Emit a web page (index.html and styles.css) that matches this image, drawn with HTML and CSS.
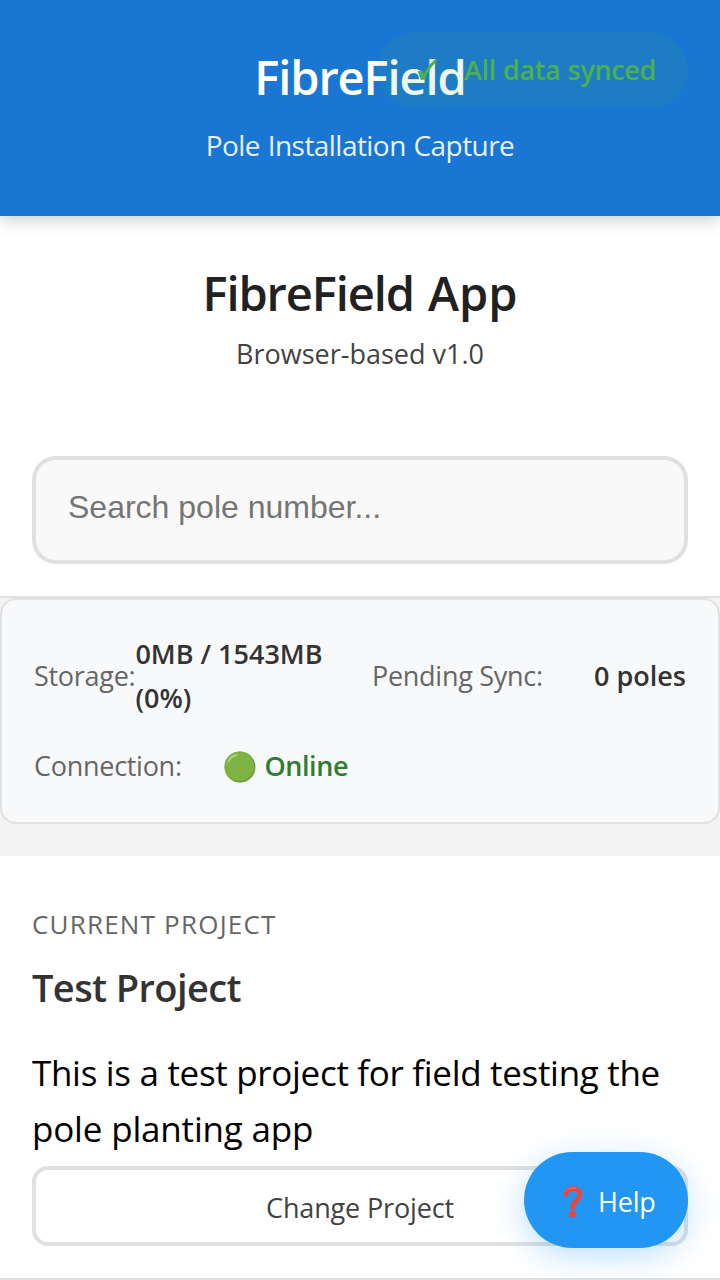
FILE: index.html
```html
<!DOCTYPE html>
<html lang="en">
<head>
<meta charset="utf-8">
<title>FibreField</title>
<link rel="stylesheet" href="styles.css">
</head>
<body>
<header class="header">
  <h1 class="brand">FibreField</h1>
  <p class="tagline">Pole Installation Capture</p>
</header>
<div class="sync-badge">
  <svg class="check" viewBox="0 0 22 22" width="22" height="22"><path d="M.8 12.600 4.900 11.300 6.600 15.200C9 10.500 13 4.500 17.300 1L21 1C15.700 6 10.700 13 7.600 20.400L3.800 20.900Z" fill="#4caf50"/></svg>
  <span class="sync-text">All data synced</span>
</div>
<main>
  <section class="intro">
    <h2 class="app-title">FibreField <span class="app-word">App</span></h2>
    <p class="version">Browser-based v1.0</p>
    <input class="search" type="text" placeholder="Search pole number...">
  </section>
  <section class="status">
    <div class="status-item"><span class="label">Storage:</span><span class="value storage-value">0MB / 1543MB (0%)</span></div>
    <div class="status-item"><span class="label">Pending Sync:</span><span class="value">0 poles</span></div>
    <div class="status-item"><span class="label">Connection:</span><span class="value online">
      <svg class="dot" viewBox="0 0 32 32" width="32" height="32"><circle cx="16" cy="16" r="15.500" fill="#689f38"/><circle cx="15.300" cy="15.400" r="14.700" fill="#7cb342"/><path d="M4 11C5 6 9 3 13 3.200 15 3.500 13.500 5 11.500 5.500 8.500 6.500 7 8 5.500 10.500 4.800 11.700 4 12 4 11Z" fill="#aed581"/></svg><span class="online-text">Online</span></span></div>
  </section>
  <section class="project">
    <div class="eyebrow">CURRENT PROJECT</div>
    <h3 class="project-name">Test Project</h3>
    <p class="description"><span class="line-one">This is a test project for field testing the</span> <span class="line-two">pole planting app</span></p>
    <button class="change"><span>Change Project</span></button>
  </section>
</main>
<button class="help">
  <svg class="question" viewBox="0 0 20 32" width="20" height="32"><path d="M2.800 8.600C3.600 4.200 6 2.700 10 2.700 14.500 2.700 17 5 17 8.400 17 14 9.800 14.500 9.600 21.800" fill="none" stroke="#f44336" stroke-width="4.600" stroke-linecap="round"/><path d="M4 5C6 2 10 1.300 13 2.300" fill="none" stroke="#ff7569" stroke-width="1" stroke-linecap="round"/><circle cx="9.600" cy="28.300" r="3.300" fill="#f44336"/></svg>
  <span class="help-text">Help</span>
</button>
</body>
</html>
```

FILE: styles.css
```css
* { box-sizing: border-box; }
body {
  margin: 0;
  height: 1280px;
  overflow: hidden;
  background: #f4f4f4;
  color: #000;
  font-family: "Open Sans", "Noto Sans", sans-serif;
}
h1, h2, h3, p { margin: 0; }
.header {
  position: relative;
  height: 216px;
  padding-top: 43px;
  background: #1976d2;
  color: #fff;
  text-align: center;
  box-shadow: 0 4px 16px rgba(0, 0, 0, .2);
  z-index: 1;
}
.brand { font-size: 47px; line-height: 68px; font-weight: 600; letter-spacing: -1.1px; }
.tagline { margin-top: 12px; font-size: 28px; line-height: 44px; opacity: .9; letter-spacing: -.55px; word-spacing: 1px; }
.sync-badge {
  position: absolute;
  top: 32px;
  right: 32px;
  z-index: 2;
  display: flex;
  align-items: center;
  width: 311px;
  height: 76px;
  padding-left: 40px;
  border-radius: 38px;
  background: rgba(76, 175, 80, .1);
  color: #4caf50;
}
.check { flex: none; margin-right: 25px; }
.sync-text { padding-bottom: 2px; font-size: 27px; font-weight: 600; letter-spacing: -.35px; word-spacing: .5px; white-space: nowrap; }
.intro {
  height: 382px;
  padding: 43px 32px 32px;
  border-bottom: 2px solid #e0e0e0;
  background: #fff;
  text-align: center;
}
.app-title { font-size: 47px; line-height: 68px; font-weight: 600; color: #212121; letter-spacing: -1.1px; word-spacing: 3px; }
.app-word { letter-spacing: 0; }
.version { margin-top: 5px; font-size: 27px; line-height: 44px; color: #424242; }
.search {
  display: block;
  width: 100%;
  height: 108px;
  margin-top: 80px;
  padding: 0 32px 6px;
  border: 4px solid #e0e0e0;
  border-radius: 24px;
  background: #f9f9f9;
  font: 32px "Liberation Sans", Arial, sans-serif;
}
.search::placeholder { color: #757575; }
.status {
  display: grid;
  grid-template-columns: 314px 314px;
  grid-template-rows: 88px 44px;
  gap: 24px;
  height: 226px;
  padding: 32px;
  border: 2px solid #e0e0e0;
  border-radius: 16px;
  background: #f8f9fb;
}
.status-item { display: flex; align-items: center; justify-content: space-between; font-size: 27px; line-height: 44px; }
.label { color: #666; white-space: nowrap; letter-spacing: -.28px; }
.value { color: #333; font-weight: 600; white-space: nowrap; }
.storage-value { width: 215px; white-space: normal; }
.online { display: flex; align-items: center; gap: 9px; color: #2e7d32; }
.online-text { letter-spacing: -.45px; }
.dot { position: relative; top: 1px; }
.project {
  height: 424px;
  margin-top: 32px;
  padding: 47px 32px 0;
  border-bottom: 2px solid #e0e0e0;
  background: #fff;
}
.eyebrow { font-size: 26px; line-height: 42px; color: #666; letter-spacing: 1.2px; }
.project-name { margin-top: 12px; font-size: 38px; line-height: 60px; font-weight: 600; color: #333; letter-spacing: -.6px; }
.description { margin-top: 28px; font-size: 35px; line-height: 56px; white-space: nowrap; }
.line-one, .line-two { display: block; }
.line-one { letter-spacing: -.31px; }
.line-two { letter-spacing: -.18px; }
.change {
  display: block;
  width: 100%;
  height: 80px;
  margin-top: 9px;
  padding: 3px 0 1px;
  border: 4px solid #e0e0e0;
  border-radius: 16px;
  background: #fff;
  color: #424242;
  font: 27px "Open Sans", sans-serif;
  letter-spacing: -.15px;
}
.help {
  position: absolute;
  right: 32px;
  bottom: 32px;
  z-index: 3;
  display: flex;
  align-items: center;
  width: 164px;
  height: 96px;
  padding: 4px 0 0 39px;
  border: 0;
  border-radius: 48px;
  background: #2196f3;
  color: #fff;
  box-shadow: 0 8px 32px rgba(33, 150, 243, .3);
  font: 27px "Open Sans", sans-serif;
}
.question { flex: none; margin-right: 15px; }
.help-text { padding-bottom: 1px; letter-spacing: -.2px; }
```
